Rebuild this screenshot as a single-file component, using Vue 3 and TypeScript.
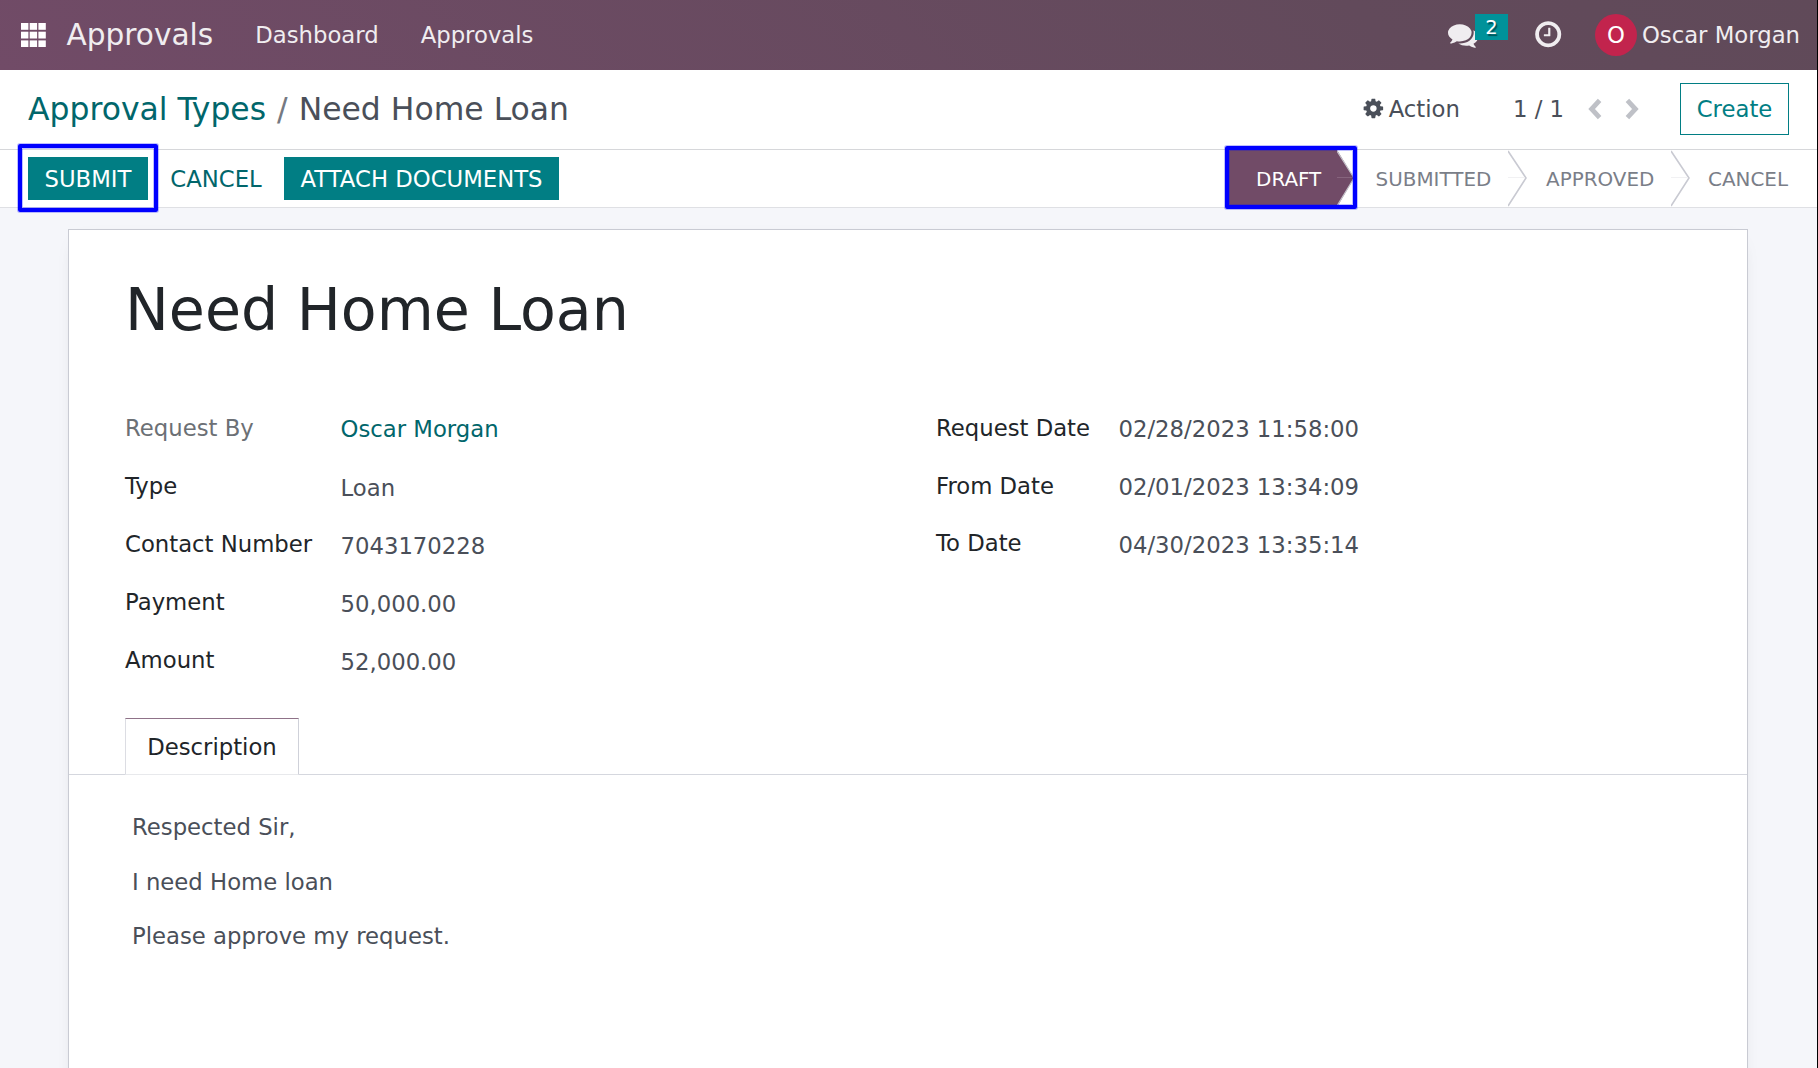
<script setup lang="ts">
interface Field {
  label: string
  value: string
  muted?: boolean
  link?: boolean
}

const menus: string[] = ['Dashboard', 'Approvals']

const leftFields: Field[] = [
  { label: 'Request By', value: 'Oscar Morgan', muted: true, link: true },
  { label: 'Type', value: 'Loan' },
  { label: 'Contact Number', value: '7043170228' },
  { label: 'Payment', value: '50,000.00' },
  { label: 'Amount', value: '52,000.00' },
]

const rightFields: Field[] = [
  { label: 'Request Date', value: '02/28/2023 11:58:00' },
  { label: 'From Date', value: '02/01/2023 13:34:09' },
  { label: 'To Date', value: '04/30/2023 13:35:14' },
]

const paragraphs: string[] = ['Respected Sir,', 'I need Home loan', 'Please approve my request.']
</script>

<template>
  <div class="page">
    <header class="navbar">
      <svg class="apps" viewBox="0 0 25 24" width="25" height="24" fill="#fff">
        <template v-for="r in 3" :key="r">
          <rect v-for="c in 3" :key="c" :x="(c - 1) * 8.7" :y="(r - 1) * 8.7" width="7.4" height="6.8" />
        </template>
      </svg>
      <span class="brand">Approvals</span>
      <nav class="menus">
        <a v-for="m in menus" :key="m">{{ m }}</a>
      </nav>
      <div class="systray">
        <div class="chat">
          <svg viewBox="0 0 1792 1792" width="30" height="30" fill="#f0edf0"><path d="M1408 768q0 139-94 257t-256.5 186.5-353.5 68.5q-86 0-176-16-124 88-278 128-36 9-86 16h-3q-11 0-20.5-8t-11.5-21q-1-3-1-6.5t.5-6.5 2-6l2.5-5t3.5-5.5 4-5 4.5-5 4-4.5q5-6 23-25t26-29.5 22.5-29 25-38.5 20.5-44q-124-72-195-177t-71-224q0-139 94-257t256.5-186.5 353.5-68.5 353.5 68.5 256.5 186.5 94 257zm384 256q0 120-71 224.5t-195 176.5q10 24 20.5 44t25 38.5 22.5 29 26 29.5 23 25q1 1 4 4.5t4.5 5 4 5 3.5 5.5l2.5 5t2 6 .5 6.5-1 6.5q-3 14-13 22t-22 7q-50-7-86-16-154-40-278-128-90 16-176 16-271 0-472-132 58 4 88 4 161 0 309-45t264-129q125-92 192-212t67-254q0-77-23-152 129 71 204 178t75 230z" /></svg>
          <span class="badge">2</span>
        </div>
        <svg class="clock" viewBox="0 0 1792 1792" width="30.4" height="30.4" fill="#f0edf0"><path d="M1024 544v448q0 14-9 23t-23 9h-320q-14 0-23-9t-9-23v-64q0-14 9-23t23-9h224v-352q0-14 9-23t23-9h64q14 0 23 9t9 23zm416 352q0-148-73-273t-198-198-273-73-273 73-198 198-73 273 73 273 198 198 273 73 273-73 198-198 73-273zm224 0q0 209-103 385.5t-279.5 279.5-385.5 103-385.5-103-279.5-279.5-103-385.5 103-385.5 279.5-279.5 385.5-103 385.5 103 279.5 279.5 103 385.5z" /></svg>
        <span class="avatar">O</span>
        <span class="user">Oscar Morgan</span>
      </div>
    </header>

    <section class="control">
      <div class="crumbs"><a>Approval Types</a><span class="slash">/</span><span>Need Home Loan</span></div>
      <div class="tools">
        <svg viewBox="0 0 1792 1792" width="22.75" height="22.75" fill="#4a4f59"><path d="M1152 896q0-106-75-181t-181-75-181 75-75 181 75 181 181 75 181-75 75-181zm512-109v222q0 12-8 23t-20 13l-185 28q-19 54-39 91 35 50 107 138 10 12 10 25t-9 23q-27 37-99 108t-94 71q-12 0-26-9l-138-108q-44 23-91 38-16 136-29 186-7 28-36 28h-222q-14 0-24.5-8.5t-11.5-21.5l-28-184q-49-16-90-37l-141 107q-10 9-25 9-14 0-25-11-126-114-165-168-7-10-7-23 0-12 8-23 15-21 51-66.5t54-70.5q-27-50-41-99l-183-27q-13-2-21-12.5t-8-23.5v-222q0-12 8-23t19-13l186-28q14-46 39-92-40-57-107-138-10-12-10-24 0-10 9-23 26-36 98.5-107.5t94.5-71.5q13 0 26 10l138 107q44-23 91-38 16-136 29-186 7-28 36-28h222q14 0 24.5 8.5t11.5 21.5l28 184q49 16 90 37l142-107q9-9 24-9 13 0 25 10 129 119 165 170 7 8 7 22 0 12-8 23-15 21-51 66.5t-54 70.5q26 50 41 98l183 28q13 2 21 12.5t8 23.5z" /></svg>
        <span class="action">Action</span>
        <span class="pager">1 / 1</span>
        <svg class="prev" viewBox="0 0 14 22" width="14" height="22" fill="none" stroke="#bfc1c7" stroke-width="4.8"><path d="M11.6 2.4 3.6 11l8 8.6" /></svg>
        <svg class="next" viewBox="0 0 14 22" width="14" height="22" fill="none" stroke="#bfc1c7" stroke-width="4.8"><path d="M2.4 2.4 10.4 11l-8 8.6" /></svg>
        <button class="create">Create</button>
      </div>
    </section>

    <section class="statusbar">
      <div class="buttons">
        <button class="btn primary submit">SUBMIT<i class="mark mark-submit"></i></button>
        <button class="btn link">CANCEL</button>
        <button class="btn primary attach">ATTACH DOCUMENTS</button>
      </div>
      <div class="stages">
        <div class="stage draft">
          <span>DRAFT</span>
          <svg viewBox="0 0 18 57" width="18" height="57">
            <path d="M0 0 17 28 0 57z" fill="#714b67" />
            <path d="M0 1 17 28 0 56" fill="none" stroke="#c5c2ca" stroke-width="1.2" />
            <path d="M0 27.5H16" stroke="#86647d" />
          </svg>
          <i class="mark mark-draft"></i>
        </div>
        <div class="stage submitted">
          <span>SUBMITTED</span>
          <svg viewBox="0 0 19 57" width="19" height="57"><path d="M0 1 18 28 0 56" fill="none" stroke="#c9cad2" stroke-width="1.6" /><path d="M0 27.5H17" stroke="#f1f1f3" /></svg>
        </div>
        <div class="stage approved">
          <span>APPROVED</span>
          <svg viewBox="0 0 19 57" width="19" height="57"><path d="M0 1 18 28 0 56" fill="none" stroke="#c9cad2" stroke-width="1.6" /><path d="M0 27.5H17" stroke="#f1f1f3" /></svg>
        </div>
        <div class="stage cancel"><span>CANCEL</span></div>
      </div>
    </section>

    <main class="content">
      <article class="sheet">
        <h1>Need Home Loan</h1>
        <div class="groups">
          <div class="group left">
            <div v-for="f in leftFields" :key="f.label" class="row">
              <label :class="{ muted: f.muted }">{{ f.label }}</label>
              <span class="value" :class="{ teal: f.link }">{{ f.value }}</span>
            </div>
          </div>
          <div class="group right">
            <div v-for="f in rightFields" :key="f.label" class="row">
              <label>{{ f.label }}</label>
              <span class="value">{{ f.value }}</span>
            </div>
          </div>
        </div>
        <div class="tabs"><div class="tab">Description</div></div>
        <div class="description">
          <p v-for="p in paragraphs" :key="p">{{ p }}</p>
        </div>
      </article>
    </main>
  </div>
</template>

<style>
body {
  margin: 0;
  overflow: hidden;
}
</style>

<style scoped>
.page {
  box-sizing: border-box;
  width: 1818px;
  height: 1068px;
  display: flex;
  flex-direction: column;
  overflow: hidden;
  border-right: 1px solid #000;
  background: #f5f6fa;
  color: #4a4f59;
  font-family: "DejaVu Sans", sans-serif;
  font-size: 22.75px;
  white-space: nowrap;
}
button {
  font: inherit;
  border: 0;
  border-radius: 0;
  margin: 0;
  padding: 0;
  background: none;
  box-sizing: border-box;
}
svg {
  display: block;
  flex: none;
}
.navbar {
  flex: none;
  height: 70px;
  display: flex;
  align-items: center;
  padding-left: 21px;
  line-height: 70px;
  color: #f0edf0;
  background: linear-gradient(45deg, #714b67, #624a5b 75%, #604a59);
}
.brand {
  margin-left: 20.5px;
  font-size: 29.6px;
}
.menus {
  display: flex;
  gap: 42px;
  margin-left: 42px;
}
.systray {
  margin-left: auto;
  display: flex;
  align-items: center;
  height: 70px;
  padding-right: 17px;
}
.chat {
  position: relative;
  width: 60px;
  height: 30px;
  margin-right: 25px;
}
.badge {
  position: absolute;
  left: 27px;
  top: -6px;
  width: 33px;
  height: 26px;
  background: #00929a;
  color: #fff;
  font-size: 19.5px;
  line-height: 27px;
  text-align: center;
  text-shadow: 1.5px 1.5px 1px rgba(0, 0, 0, 0.45);
}
.clock {
  margin-top: -1px;
}
.avatar {
  width: 42px;
  height: 42px;
  margin-left: 31.6px;
  border-radius: 50%;
  background: #c2244d;
  color: #fff;
  line-height: 42px;
  text-align: center;
}
.user {
  margin-left: 5px;
}
.control {
  flex: none;
  box-sizing: border-box;
  height: 80px;
  display: flex;
  align-items: center;
  justify-content: space-between;
  padding: 0 28px 2px;
  background: #fff;
  border-bottom: 1px solid #d6d7da;
}
.crumbs {
  font-size: 31.45px;
}
.crumbs a {
  color: #01666b;
}
.slash {
  margin: 0 11px;
  color: #757982;
}
.tools {
  display: flex;
  align-items: center;
}
.action {
  margin-left: 4px;
}
.pager {
  margin-left: 53px;
}
.prev {
  margin-left: 24px;
}
.next {
  margin-left: 23px;
}
.create {
  width: 109px;
  height: 52px;
  margin-left: 41px;
  border: 1px solid #017e84;
  color: #017e84;
}
.statusbar {
  flex: none;
  height: 57px;
  display: flex;
  justify-content: space-between;
  padding: 0 29px 0 28px;
  background: #fff;
  border-bottom: 1px solid #dfe0e4;
}
.buttons {
  display: flex;
  align-items: center;
}
.btn {
  position: relative;
  height: 43px;
  line-height: 43px;
  padding-top: 1px;
}
.primary {
  background: #017e84;
  color: #fff;
}
.submit {
  width: 120px;
}
.link {
  width: 136px;
  color: #01666b;
}
.attach {
  width: 275px;
}
.mark {
  position: absolute;
  z-index: 2;
  box-sizing: border-box;
  border: 4px solid #0000ff;
  border-radius: 2px;
  box-shadow: 0 0 0 1px rgba(0, 0, 255, 0.25), inset 0 0 0 1px rgba(0, 0, 255, 0.25);
}
.mark-submit {
  left: -10px;
  top: -13px;
  width: 140px;
  height: 68px;
}
.stages {
  display: flex;
  height: 57px;
  font-size: 19.9px;
  line-height: 60px;
  color: #7a7e88;
}
.stage {
  position: relative;
  display: flex;
  height: 57px;
}
.stage span {
  box-sizing: border-box;
  height: 57px;
}
.draft span {
  width: 108px;
  padding-left: 27px;
  background: #714b67;
  color: #fff;
}
.mark-draft {
  left: -4px;
  top: -4px;
  width: 132px;
  height: 63px;
}
.submitted span {
  width: 153px;
  padding-left: 20.5px;
}
.approved span {
  width: 144px;
  padding-left: 19px;
}
.cancel span {
  padding-left: 18px;
}
.content {
  flex: 1;
  display: flex;
  padding: 21px 69px 0 68px;
}
.sheet {
  box-sizing: border-box;
  width: 1680px;
  height: 900px;
  flex: none;
  border: 1px solid #c9cbd3;
  background: #fff;
  box-shadow: 0 5px 20px -15px rgba(0, 0, 0, 0.4);
}
h1 {
  margin: 40px 0 0 56px;
  height: 80px;
  line-height: 80px;
  font-size: 58.6px;
  font-weight: 400;
  color: #212529;
}
.groups {
  display: flex;
  height: 307px;
  margin-top: 49px;
  padding-left: 56px;
}
.group {
  display: flex;
  flex-direction: column;
  line-height: 58px;
}
.left {
  width: 811px;
}
.row {
  display: flex;
  height: 58px;
}
label {
  width: 215.5px;
  color: #212529;
}
.right label {
  width: 182.5px;
}
.right .row:last-child label {
  margin-top: -1px;
}
.muted {
  color: #6c7075;
}
.value {
  padding-top: 2px;
}
.right .value,
.value.teal {
  padding-top: 1px;
}
.teal {
  color: #01666b;
}
.tabs {
  display: flex;
  height: 57px;
  margin-top: 12px;
  padding-left: 56px;
  box-shadow: inset 0 -1px #d5d7de;
}
.tab {
  box-sizing: border-box;
  width: 174px;
  height: 57px;
  line-height: 57px;
  border: 1px solid #cfd1d9;
  border-top-color: #8f7288;
  border-left-color: #dcdde3;
  border-bottom-color: #e8e9ec;
  background: #fff;
  color: #212529;
  text-align: center;
}
.description {
  padding: 25px 0 0 63px;
}
p {
  margin: 0;
  line-height: 54.5px;
}
</style>
